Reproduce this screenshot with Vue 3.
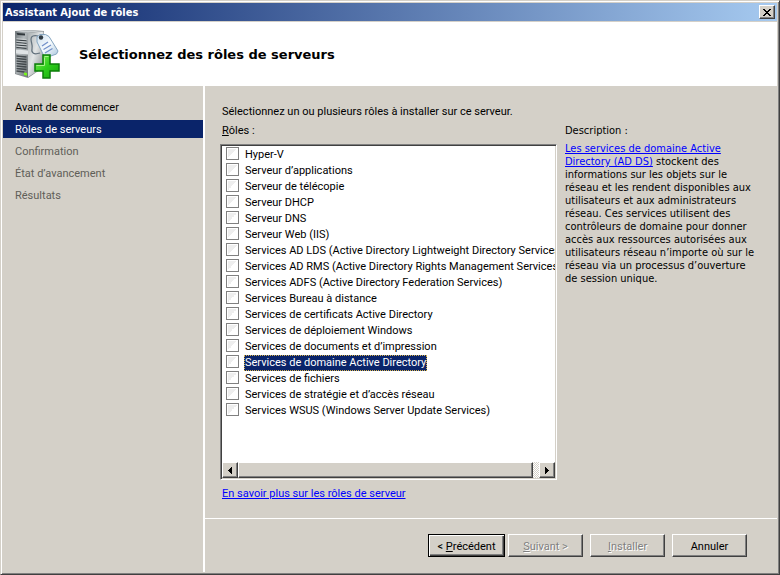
<script setup>
import { ref } from 'vue'

const steps = [
  { label: 'Avant de commencer', state: 'done' },
  { label: 'Rôles de serveurs', state: 'current' },
  { label: 'Confirmation', state: 'pending' },
  { label: 'État d’avancement', state: 'pending' },
  { label: 'Résultats', state: 'pending' },
]

const roles = ref([
  'Hyper-V',
  'Serveur d’applications',
  'Serveur de télécopie',
  'Serveur DHCP',
  'Serveur DNS',
  'Serveur Web (IIS)',
  'Services AD LDS (Active Directory Lightweight Directory Services)',
  'Services AD RMS (Active Directory Rights Management Services)',
  'Services ADFS (Active Directory Federation Services)',
  'Services Bureau à distance',
  'Services de certificats Active Directory',
  'Services de déploiement Windows',
  'Services de documents et d’impression',
  'Services de domaine Active Directory',
  'Services de fichiers',
  'Services de stratégie et d’accès réseau',
  'Services WSUS (Windows Server Update Services)',
].map((name) => ({ name, checked: false })))

const selected = ref(13)
</script>

<template>
  <div class="window">
    <header class="titlebar">
      <span class="title">Assistant Ajout de rôles</span>
      <button class="close" type="button" aria-label="Fermer">
        <svg width="8" height="7" viewBox="0 0 8 7" shape-rendering="crispEdges" aria-hidden="true">
          <path d="M0 0h2v1h1v1h2V1h1V0h2v1H7v1H6v1H5v1h1v1h1v1h1v1H6V6H5V5H3v1H2v1H0V6h1V5h1V4h1V3H2V2H1V1H0z" fill="#000" />
        </svg>
      </button>
    </header>

    <div class="banner">
      <svg class="logo" width="48" height="50" viewBox="0 0 48 50" aria-hidden="true">
        <defs>
          <linearGradient id="front" x1="0" y1="0" x2="1" y2="1">
            <stop offset="0" stop-color="#6f777b" />
            <stop offset=".4" stop-color="#b4babd" />
            <stop offset="1" stop-color="#6a7073" />
          </linearGradient>
          <linearGradient id="side" x1="0" y1="0" x2="1" y2="1">
            <stop offset="0" stop-color="#a9afb1" />
            <stop offset=".45" stop-color="#e2e5e6" />
            <stop offset="1" stop-color="#7d8386" />
          </linearGradient>
          <linearGradient id="tag" x1="0" y1="0" x2="1" y2="1">
            <stop offset="0" stop-color="#cfe0ee" />
            <stop offset=".5" stop-color="#f6fafd" />
            <stop offset="1" stop-color="#a5c3dc" />
          </linearGradient>
          <linearGradient id="plus" x1="0" y1="0" x2="1" y2="1">
            <stop offset="0" stop-color="#8af05e" />
            <stop offset=".5" stop-color="#2fcf1c" />
            <stop offset="1" stop-color="#13a30c" />
          </linearGradient>
        </defs>
        <path d="M1 2 16 1l14 1v36L14 49 1 45z" fill="#82888b" />
        <path d="M1.500 2.500 14 4v44L1.500 44.500z" fill="url(#front)" />
        <path d="M14 4 29.500 2.500v36L14 48z" fill="url(#side)" />
        <path d="M2 2.200 16 1.200l13 1L14 3.800z" fill="#c6cbcd" />
        <path d="M2.500 4 11 4.500v2L3.500 6z" fill="#30373b" />
        <path d="M2.500 11l10 .8M2.500 13.500l10 .8M2.500 16l10 .8M2.500 18.500l10 .8" stroke="#3b4246" stroke-width="1.200" />
        <path d="M2.500 9.700l10 .8M2.500 12.200l10 .8M2.500 14.700l10 .8M2.500 17.200l10 .8" stroke="#d5d9db" stroke-width=".8" />
        <path d="M2 20.500l12 1v4l-12-1z" fill="#dfe3e5" />
        <path d="M2.500 27l10 1M2.500 29.500l10 1M2.500 32l10 1M2.500 34.500l10 1M2.500 37l10 1M2.500 39.500l10 1M2.500 42l8 1" stroke="#43494d" stroke-width="1.400" />
        <path d="M10 43.500l3 .6v2.600l-3-.7z" fill="#78f51c" />
        <path d="M24 7c-4-1-7 0-7 3 0 4 2 6 1 10-1 4 2 6 8 4" fill="none" stroke="#62717d" stroke-width="1.200" />
        <path d="M23 8 26 5.500h5.500l3.500 2L44 22l-1.500 3L31 29l-8-16z" fill="url(#tag)" stroke="#85a5c0" />
        <circle cx="27" cy="8.500" r="2.200" fill="#313b43" />
        <path d="M28 17l6-4M29.500 20.500l7.500-4.500M31 24l7.500-4.500" stroke="#7290c9" stroke-width="1.300" />
        <path d="M29 26h7v9h9v7h-9v7h-7v-7h-8v-7h8z" fill="url(#plus)" stroke="#0b7d09" stroke-width="1.500" />
        <path d="M30.500 27.500h4M22.500 36.500h8v-8" fill="none" stroke="#a9f38a" />
      </svg>
      <h1 class="heading">Sélectionnez des rôles de serveurs</h1>
    </div>

    <div class="body">
      <nav class="steps" aria-label="Étapes">
        <ol class="step-list">
          <li v-for="step in steps" :key="step.label" class="step" :class="step.state">{{ step.label }}</li>
        </ol>
      </nav>

      <section class="panel">
        <main class="content">
          <p class="intro">Sélectionnez un ou plusieurs rôles à installer sur ce serveur.</p>
          <div class="columns">
            <div class="roles">
              <h2 class="caption" id="roles-caption"><u>R</u>ôles :</h2>
              <div class="listbox" role="group" aria-labelledby="roles-caption">
                <ul class="role-list">
                  <li v-for="(role, i) in roles" :key="role.name" class="role">
                    <input :id="'role-' + i" v-model="role.checked" class="check" type="checkbox" @focus="selected = i" />
                    <label :for="'role-' + i" class="role-name" :class="{ selected: selected === i }">{{ role.name }}</label>
                  </li>
                </ul>
                <div class="scrollbar">
                  <button class="arrow" type="button" aria-label="Défiler à gauche">
                    <svg width="4" height="7" viewBox="0 0 4 7" shape-rendering="crispEdges" aria-hidden="true"><path d="M4 0v7H3V6H2V5H1V4H0V3h1V2h1V1h1V0z" /></svg>
                  </button>
                  <div class="track"><div class="thumb"></div></div>
                  <button class="arrow" type="button" aria-label="Défiler à droite">
                    <svg width="4" height="7" viewBox="0 0 4 7" shape-rendering="crispEdges" aria-hidden="true"><path d="M0 0v7h1V6h1V5h1V4h1V3H3V2H2V1H1V0z" /></svg>
                  </button>
                </div>
              </div>
              <a class="more" href="#">En savoir plus sur les rôles de serveur</a>
            </div>
            <aside class="description">
              <h2 class="caption">Description :</h2>
              <p class="text">
                <a href="#">Les services de domaine Active Directory (AD DS)</a> stockent des informations sur les objets sur le réseau et les rendent disponibles aux utilisateurs et aux administrateurs réseau. Ces services utilisent des contrôleurs de domaine pour donner accès aux ressources autorisées aux utilisateurs réseau n’importe où sur le réseau via un processus d’ouverture de session unique.
              </p>
            </aside>
          </div>
        </main>

        <footer class="actions">
          <div class="pair">
            <button class="btn default" type="button">&lt; <u>P</u>récédent</button>
            <button class="btn" type="button" disabled><u>S</u>uivant &gt;</button>
          </div>
          <button class="btn" type="button" disabled><u>I</u>nstaller</button>
          <button class="btn" type="button">Annuler</button>
        </footer>
      </section>
    </div>
  </div>
</template>

<style>
body {
  margin: 0;
  background: #d4d0c8;
}
</style>

<style scoped>
.window {
  --face: #d4d0c8;
  --shadow: #808080;
  --dark: #404040;
  --navy: #0a246a;
  --condensed: "DejaVu Sans Condensed", "DejaVu Sans", sans-serif;
  box-sizing: border-box;
  min-height: 100vh;
  display: flex;
  flex-direction: column;
  padding: 2px;
  border: 1px solid;
  border-color: var(--face) var(--dark) var(--dark) var(--face);
  box-shadow: inset 1px 1px #fff, inset -1px -1px var(--shadow);
  background: var(--face);
  color: #000;
  font: 11px/13px Roboto, "Liberation Sans", sans-serif;
}
button,
input {
  margin: 0;
  padding: 0;
  border: 0;
  font: inherit;
  color: inherit;
}
a {
  color: #00f;
}
h1,
h2,
p,
ul,
ol {
  margin: 0;
  padding: 0;
  list-style: none;
}
.titlebar {
  display: flex;
  align-items: center;
  justify-content: space-between;
  height: 18px;
  margin-bottom: 1px;
  padding: 0 2px;
  background: linear-gradient(to right, var(--navy), #a6caf0);
}
.title {
  color: #fff;
  font: bold 11px/13px var(--condensed);
}
.close,
.arrow,
.thumb,
.btn {
  display: flex;
  align-items: center;
  justify-content: center;
  box-sizing: border-box;
  background: var(--face);
  border: 1px solid;
  border-color: #fff var(--dark) var(--dark) #fff;
  box-shadow: inset -1px -1px var(--shadow);
}
.close {
  width: 16px;
  height: 14px;
}
.banner {
  display: flex;
  align-items: center;
  gap: 17px;
  height: 64px;
  padding: 0 11px;
  background: #fff;
}
.heading {
  padding-top: 2px;
  font: bold 13px/18px "DejaVu Sans", sans-serif;
}
.body {
  flex: 1;
  display: flex;
}
.steps {
  flex: 0 0 200px;
  border-right: 2px solid #fff;
}
.step-list {
  display: grid;
  gap: 4px;
  padding-top: 12px;
}
.step {
  padding: 2px 12px 0;
  line-height: 16px;
}
.step.current {
  background: var(--navy);
  color: #fff;
}
.step.pending {
  color: #605e58;
}
.panel {
  flex: 1;
  min-width: 0;
  display: flex;
  flex-direction: column;
}
.content {
  flex: 1;
  display: flex;
  flex-direction: column;
  gap: 6px;
  padding: 19px 15px 18px;
}
.intro,
.roles .caption {
  padding-left: 2px;
}
.caption {
  font-size: 11px;
  font-weight: normal;
}
.columns {
  flex: 1;
  display: grid;
  grid-template-columns: minmax(0, 337fr) minmax(0, 205fr);
}
.roles {
  display: flex;
  flex-direction: column;
  align-items: stretch;
  gap: 7px;
}
.listbox {
  flex: 1;
  display: flex;
  flex-direction: column;
  background: #fff;
  border: 1px solid;
  border-color: var(--shadow) #fff #fff var(--shadow);
  padding: 1px;
  box-shadow: inset 1px 1px var(--dark), inset -1px -1px var(--face);
}
.role-list {
  flex: 1;
  overflow: hidden;
}
.role {
  display: flex;
  align-items: flex-start;
  gap: 5px;
  height: 15px;
  padding: 1px 0 0 4px;
}
.check {
  appearance: none;
  flex: none;
  box-sizing: border-box;
  width: 13px;
  height: 13px;
  border: 1px solid var(--shadow);
  background: linear-gradient(135deg, #eee 50%, #fff 50%);
  box-shadow: inset 0 0 0 1px #fff;
}
.check:checked {
  background: var(--navy);
}
.role-name {
  padding: 0 1px;
  line-height: 16px;
  white-space: nowrap;
}
.role-name.selected {
  background: var(--navy);
  color: #fff;
  outline: 1px dotted #d8b24a;
  outline-offset: -1px;
}
.scrollbar {
  display: flex;
  height: 16px;
}
.arrow {
  flex: none;
  width: 16px;
}
.track {
  flex: 1;
  display: flex;
  background: repeating-conic-gradient(#fff 0 25%, var(--face) 0 50%) 0 0 / 2px 2px;
}
.thumb {
  width: 98%;
}
.more {
  align-self: flex-start;
  padding-left: 2px;
}
.description {
  padding: 0 4px 0 8px;
}
.description .caption,
.text {
  font-family: var(--condensed);
}
.text {
  padding-top: 5px;
}
.actions {
  display: flex;
  justify-content: flex-end;
  gap: 7px;
  padding: 15px 30px;
  border-top: 1px solid #fff;
}
.pair {
  display: flex;
  gap: 3px;
}
.btn {
  display: block;
  width: 75px;
  height: 23px;
  padding-top: 1px;
  text-align: center;
}
.btn.default {
  width: 77px;
  border-color: #000;
  box-shadow: inset 1px 1px #fff, inset -1px -1px var(--dark), inset -2px -2px var(--shadow);
}
.btn:disabled {
  color: var(--shadow);
  text-shadow: 1px 1px #fff;
}
</style>
